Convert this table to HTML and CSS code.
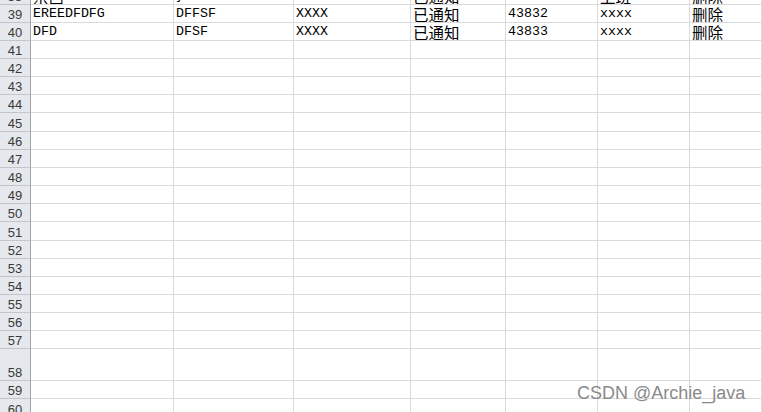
FILE: index.html
```html
<!DOCTYPE html>
<html>
<head>
<meta charset="utf-8">
<link rel="stylesheet" href="styles.css">
</head>
<body>
<div class="sheet">
  <div class="row r38"><div class="hd">38</div><div class="c"><span class="cjk">京西</span></div><div class="c">yahds</div><div class="c">maitesu300</div><div class="c"><span class="cjk">已通知</span></div><div class="c">43831</div><div class="c"><span class="cjk">上班</span></div><div class="c"><span class="cjk">删除</span></div></div>
  <div class="row"><div class="hd">39</div><div class="c">EREEDFDFG</div><div class="c">DFFSF</div><div class="c">XXXX</div><div class="c"><span class="cjk">已通知</span></div><div class="c">43832</div><div class="c">xxxx</div><div class="c"><span class="cjk">删除</span></div></div>
  <div class="row"><div class="hd">40</div><div class="c">DFD</div><div class="c">DFSF</div><div class="c">XXXX</div><div class="c"><span class="cjk">已通知</span></div><div class="c">43833</div><div class="c">xxxx</div><div class="c"><span class="cjk">删除</span></div></div>
  <div class="row"><div class="hd">41</div><div class="c"></div><div class="c"></div><div class="c"></div><div class="c"></div><div class="c"></div><div class="c"></div><div class="c"></div></div>
  <div class="row"><div class="hd">42</div><div class="c"></div><div class="c"></div><div class="c"></div><div class="c"></div><div class="c"></div><div class="c"></div><div class="c"></div></div>
  <div class="row"><div class="hd">43</div><div class="c"></div><div class="c"></div><div class="c"></div><div class="c"></div><div class="c"></div><div class="c"></div><div class="c"></div></div>
  <div class="row"><div class="hd">44</div><div class="c"></div><div class="c"></div><div class="c"></div><div class="c"></div><div class="c"></div><div class="c"></div><div class="c"></div></div>
  <div class="row"><div class="hd">45</div><div class="c"></div><div class="c"></div><div class="c"></div><div class="c"></div><div class="c"></div><div class="c"></div><div class="c"></div></div>
  <div class="row"><div class="hd">46</div><div class="c"></div><div class="c"></div><div class="c"></div><div class="c"></div><div class="c"></div><div class="c"></div><div class="c"></div></div>
  <div class="row"><div class="hd">47</div><div class="c"></div><div class="c"></div><div class="c"></div><div class="c"></div><div class="c"></div><div class="c"></div><div class="c"></div></div>
  <div class="row"><div class="hd">48</div><div class="c"></div><div class="c"></div><div class="c"></div><div class="c"></div><div class="c"></div><div class="c"></div><div class="c"></div></div>
  <div class="row"><div class="hd">49</div><div class="c"></div><div class="c"></div><div class="c"></div><div class="c"></div><div class="c"></div><div class="c"></div><div class="c"></div></div>
  <div class="row"><div class="hd">50</div><div class="c"></div><div class="c"></div><div class="c"></div><div class="c"></div><div class="c"></div><div class="c"></div><div class="c"></div></div>
  <div class="row"><div class="hd">51</div><div class="c"></div><div class="c"></div><div class="c"></div><div class="c"></div><div class="c"></div><div class="c"></div><div class="c"></div></div>
  <div class="row"><div class="hd">52</div><div class="c"></div><div class="c"></div><div class="c"></div><div class="c"></div><div class="c"></div><div class="c"></div><div class="c"></div></div>
  <div class="row"><div class="hd">53</div><div class="c"></div><div class="c"></div><div class="c"></div><div class="c"></div><div class="c"></div><div class="c"></div><div class="c"></div></div>
  <div class="row"><div class="hd">54</div><div class="c"></div><div class="c"></div><div class="c"></div><div class="c"></div><div class="c"></div><div class="c"></div><div class="c"></div></div>
  <div class="row"><div class="hd">55</div><div class="c"></div><div class="c"></div><div class="c"></div><div class="c"></div><div class="c"></div><div class="c"></div><div class="c"></div></div>
  <div class="row"><div class="hd">56</div><div class="c"></div><div class="c"></div><div class="c"></div><div class="c"></div><div class="c"></div><div class="c"></div><div class="c"></div></div>
  <div class="row"><div class="hd">57</div><div class="c"></div><div class="c"></div><div class="c"></div><div class="c"></div><div class="c"></div><div class="c"></div><div class="c"></div></div>
  <div class="row tall"><div class="hd">58</div><div class="c"></div><div class="c"></div><div class="c"></div><div class="c"></div><div class="c"></div><div class="c"></div><div class="c"></div></div>
  <div class="row r59"><div class="hd">59</div><div class="c"></div><div class="c"></div><div class="c"></div><div class="c"></div><div class="c"></div><div class="c"></div><div class="c"></div></div>
  <div class="row"><div class="hd">60</div><div class="c"></div><div class="c"></div><div class="c"></div><div class="c"></div><div class="c"></div><div class="c"></div><div class="c"></div></div>
</div>
<div class="watermark">CSDN @Archie_java</div>
</body>
</html>
```
FILE: styles.css
```css
* { box-sizing: border-box; }
html, body { margin: 0; padding: 0; background: #fff; overflow: hidden; }
body { width: 762px; height: 412px; position: relative; }
.sheet {
  margin-top: -13.66px;
  font-family: "Liberation Mono", monospace;
  font-size: 13.3px;
  color: #000;
}
.row {
  display: grid;
  grid-template-columns: 31px 143px 120px 117px 95px 92px 92px 1fr;
  height: 18.16px;
}
.row.tall { height: 31.4px; }
.row.r59 { height: 18.6px; }
.hd {
  background: #e5e8ec;
  border-right: 1px solid #9ea3a8;
  border-bottom: 1px solid #c2c6cb;
  font-family: "Liberation Sans", sans-serif;
  font-size: 13px;
  color: #3a3a3a;
  display: flex;
  align-items: flex-end;
  justify-content: center;
  padding-bottom: 1px;
  line-height: 13px;
}
.c {
  border-right: 1px solid #d9dadb;
  border-bottom: 1px solid #d9dadb;
  display: flex;
  align-items: flex-end;
  padding-left: 2px;
  padding-bottom: 1px;
  white-space: nowrap;
  overflow: hidden;
  line-height: 15px;
}
.cjk {
  font-family: "Noto Sans CJK SC", sans-serif;
  font-size: 15.5px;
  line-height: 16px;
  margin-bottom: -1px;
}
.watermark {
  position: absolute;
  left: 577px;
  top: 384px;
  font-family: "Liberation Sans", sans-serif;
  font-size: 18px;
  line-height: 18px;
  color: #8a8a8a;
}
```
